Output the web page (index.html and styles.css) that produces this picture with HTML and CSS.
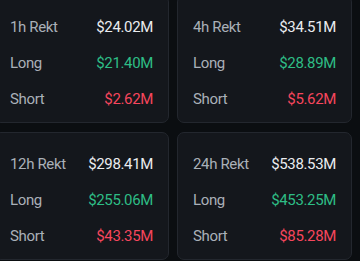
FILE: index.html
```html
<!DOCTYPE html>
<html>
<head>
<meta charset="utf-8">
<link rel="stylesheet" href="styles.css">
</head>
<body>
<div class="grid">
  <div class="card">
    <div class="row"><span class="label">1h Rekt</span><span class="value">$24.02M</span></div>
    <div class="row"><span class="label">Long</span><span class="value long">$21.40M</span></div>
    <div class="row"><span class="label">Short</span><span class="value short">$2.62M</span></div>
  </div>
  <div class="card">
    <div class="row"><span class="label">4h Rekt</span><span class="value">$34.51M</span></div>
    <div class="row"><span class="label">Long</span><span class="value long">$28.89M</span></div>
    <div class="row"><span class="label">Short</span><span class="value short">$5.62M</span></div>
  </div>
  <div class="card">
    <div class="row"><span class="label">12h Rekt</span><span class="value">$298.41M</span></div>
    <div class="row"><span class="label">Long</span><span class="value long">$255.06M</span></div>
    <div class="row"><span class="label">Short</span><span class="value short">$43.35M</span></div>
  </div>
  <div class="card">
    <div class="row"><span class="label">24h Rekt</span><span class="value">$538.53M</span></div>
    <div class="row"><span class="label">Long</span><span class="value long">$453.25M</span></div>
    <div class="row"><span class="label">Short</span><span class="value short">$85.28M</span></div>
  </div>
</div>
</body>
</html>
```

FILE: styles.css
```css
html, body {
  margin: 0;
  padding: 0;
  background: #0b0e11;
  overflow: hidden;
  height: 261px;
}
body {
  font-family: Roboto, "Noto Sans", sans-serif;
  font-size: 15px;
  letter-spacing: -0.35px;
}
.grid {
  display: grid;
  grid-template-columns: 175px 175px;
  column-gap: 8px;
  row-gap: 9px;
  margin-left: -6px;
  margin-top: -5px;
}
.card {
  box-sizing: border-box;
  height: 128px;
  background: #14171c;
  border: 1px solid #23272e;
  border-radius: 7px;
  padding: 21px 15px 0 15px;
  display: flex;
  flex-direction: column;
  gap: 16px;
}
.row {
  display: flex;
  justify-content: space-between;
  align-items: center;
  line-height: 20px;
  height: 20px;
}
.label {
  color: #aab0b8;
  font-weight: 400;
}
.value {
  color: #eaecef;
  font-weight: 400;
}
.value.long { color: #2ebd85; }
.value.short { color: #f6465d; }
```
